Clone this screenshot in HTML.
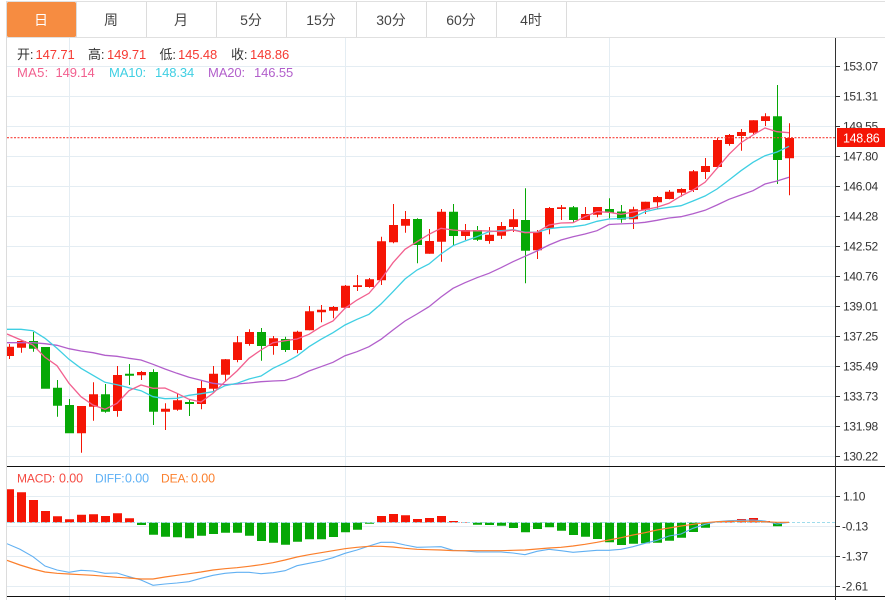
<!DOCTYPE html>
<html><head><meta charset="utf-8">
<style>
html,body{margin:0;padding:0;background:#fff;width:885px;height:600px;overflow:hidden}
svg{display:block}
text{font-family:"Liberation Sans","Noto Sans CJK SC",sans-serif}
.ax{font-size:12px;fill:#333;letter-spacing:-.3px}
.t{font-size:14px;fill:#444;text-anchor:middle}
.h{font-size:13px;letter-spacing:-.1px}
</style></head><body>
<svg width="885" height="600" viewBox="0 0 885 600" xmlns="http://www.w3.org/2000/svg">
<defs><clipPath id="c"><rect x="7" y="38" width="828" height="562"/></clipPath></defs>
<!-- tabs -->
<path d="M6 1.5H885M6 37.5H885" stroke="#e0e0e0" fill="none"/>
<path d="M6.5 1V600M76.5 2V37M146.5 2V37M216.5 2V37M286.5 2V37M356.5 2V37M426.5 2V37M496.5 2V37M566.5 2V37" stroke="#dcdcdc" fill="none"/>
<rect x="7" y="2" width="69" height="35" rx="1.5" fill="#f68c41"/>
<text class="t" x="41" y="25" style="fill:#fff">日</text>
<text class="t" x="111" y="25">周</text>
<text class="t" x="181" y="25">月</text>
<text class="t" x="251" y="25">5分</text>
<text class="t" x="321" y="25">15分</text>
<text class="t" x="391" y="25">30分</text>
<text class="t" x="461" y="25">60分</text>
<text class="t" x="531" y="25">4时</text>
<!-- grid -->
<path d="M7 66.5H835M7 96.5H835M7 126.5H835M7 156.5H835M7 186.5H835M7 216.5H835M7 246.5H835M7 276.5H835M7 306.5H835M7 336.5H835M7 366.5H835M7 396.5H835M7 426.5H835M7 456.5H835M7 496.5H835M7 526.5H835M7 556.5H835M7 586.5H835M69.5 38V600M345.5 38V600M609.5 38V600" stroke="#e4edf3" fill="none"/>
<g clip-path="url(#c)">
<!-- red wicks -->
<path fill="none" stroke="#f51505" d="M9.5 344V359M21.5 340V352.7M81.5 406V452.7M93.5 382.3V420.7M117.5 366V416.7M141.5 371V380M165.5 403.3V430M177.5 394V410.7M201.5 380V409.3M213.5 366V393M225.5 359V380.7M237.5 336V362.3M249.5 329.3V345.7M273.5 336V354.7M297.5 330.7V353.3M309.5 306V330.3M321.5 305V322.3M333.5 306V318.3M345.5 285V308M357.5 275V291M369.5 278V287.7M381.5 236.7V285M393.5 204V243.3M405.5 211V232.7M429.5 229V253.7M441.5 209V261.7M465.5 224V240M489.5 227V243.7M501.5 222V239M513.5 209V232M537.5 230V259M549.5 207V234.3M561.5 205V220M585.5 207V220M597.5 207V217.3M633.5 206.7V229M645.5 201.7V214M657.5 196V209M669.5 190V199.3M681.5 188.3V196.7M693.5 170V192M705.5 158V179M717.5 137.7V167.7M729.5 134V145.7M741.5 129V150.7M753.5 120.3V134M765.5 113.3V126M789.5 123.3V195.3"/>
<!-- green wicks -->
<path fill="none" stroke="#06a806" d="M33.5 332V351.7M57.5 380V416.7M69.5 399V433M105.5 384V412.7M129.5 364V385M153.5 369.3V425M189.5 399.3V416M261.5 328V360.7M285.5 336.7V352M417.5 218.3V263.3M453.5 204V245.7M477.5 226V241M525.5 188.3V283.3M573.5 206V222.7M609.5 198.3V218.3M621.5 205V222.7M777.5 85V184"/>
<!-- red bodies -->
<path fill="#f51505" d="M5 346.7h9V356h-9zM17 341h9V347.7h-9zM77 406h9V433.3h-9zM89 394.3h9V406.7h-9zM113 375h9V411h-9zM137 372h9V375.3h-9zM161 408.7h9V411.7h-9zM173 400.3h9V409.7h-9zM197 388h9V404h-9zM209 373.7h9V388.7h-9zM221 359.3h9V374.7h-9zM233 342.3h9V360h-9zM245 332h9V344h-9zM269 338.3h9V346h-9zM293 331.7h9V350h-9zM305 311.3h9V330.3h-9zM317 309.7h9V312.3h-9zM329 307h9V310.7h-9zM341 285.7h9V307.7h-9zM353 285.3h9V287h-9zM365 279.3h9V287h-9zM377 241.3h9V280.3h-9zM389 225h9V242.3h-9zM401 219h9V225.7h-9zM425 241h9V253.7h-9zM437 211.7h9V241.7h-9zM461 230h9V236h-9zM485 234.7h9V241h-9zM497 226h9V235.7h-9zM509 219.3h9V227h-9zM533 231.7h9V250.3h-9zM545 208h9V228.3h-9zM557 207.3h9V209h-9zM581 214h9V220h-9zM593 207h9V214.7h-9zM629 209.3h9V219.3h-9zM641 201.7h9V209.7h-9zM653 197h9V202.3h-9zM665 191.7h9V199h-9zM677 189h9V192.7h-9zM689 171.3h9V190h-9zM701 166h9V172h-9zM713 140h9V167h-9zM725 135h9V144h-9zM737 132h9V136h-9zM749 120.3h9V132.7h-9zM761 116.3h9V121h-9zM785 138h9V158.3h-9z"/>
<!-- green bodies -->
<path fill="#06a806" d="M29 341h9V348.7h-9zM41 347h9V388.7h-9zM53 387.7h9V405.7h-9zM65 405h9V433.3h-9zM101 394.3h9V411.7h-9zM125 373.7h9V375.7h-9zM149 372h9V411.7h-9zM185 402h9V404h-9zM257 332h9V346h-9zM281 339h9V350h-9zM413 219h9V245h-9zM449 211.7h9V236h-9zM473 230h9V239.7h-9zM521 220h9V250.7h-9zM569 207.3h9V220h-9zM605 209h9V212.5h-9zM617 211.5h9V219.5h-9zM773 116.3h9V160h-9z"/>
<!-- MA lines -->
<polyline fill="none" stroke="#b25fcb" stroke-width="1.3" points="7,342.7 21,342.7 33,342.7 45,343.7 57,345.3 69,348.7 81,351 93,352.7 105,355.3 117,356.3 129,358.3 141,360 153,364.3 165,369 177,373.3 189,377.3 201,380.3 213,383.3 225,384.7 237,384 249,383 261,381.7 273,381 285,380.5 297,376.7 309,371 321,366.7 333,362.3 345,355.7 357,351.7 369,346.7 381,339.3 393,330 405,321 417,314 429,306.7 441,297 453,288.3 465,282.7 477,277.7 489,273.3 501,267.7 513,261.7 525,256.3 537,251 549,245 561,240 573,236.7 585,234 597,230.7 609,224.5 621,223.9 633,223.4 645,222.3 657,220.3 669,218 681,216.7 693,213.7 705,210.3 717,205 729,199.3 741,195 753,190.7 765,184 777,181 789,177.3"/>
<polyline fill="none" stroke="#3fcfe3" stroke-width="1.3" points="7,329.3 21,329.3 33,330.7 45,338.3 57,348.3 69,359.3 81,368.3 93,375.3 105,382.3 117,384.7 129,387.7 141,390.7 153,396.7 165,398.7 177,398.3 189,395.3 201,393.7 213,391.7 225,385.7 237,383.3 249,379 261,376 273,368.3 285,362.7 297,356 309,346.7 321,339.3 333,332.7 345,325 357,319.3 369,314.3 381,304 393,291.7 405,279 417,270 429,264 441,254 453,245.7 465,241 477,236.7 489,231.7 501,230.7 513,229.7 525,232.3 537,232.3 549,228.7 561,227.3 573,226.7 585,225 597,221.3 609,219 621,218.5 633,217.5 645,211.7 657,209 669,207.3 681,205.7 693,201 705,196 717,189 729,180 741,170.7 753,162.3 765,155.7 777,152 789,146.3"/>
<polyline fill="none" stroke="#f2608f" stroke-width="1.3" points="7,334 21,340 33,345 45,357.3 57,365.7 69,383.3 81,396.7 93,405 105,409.3 117,403.3 129,390.7 141,385 153,388.3 165,388 177,393.3 189,399.3 201,402 213,393.3 225,381.7 237,371 249,358.3 261,350 273,342.7 285,340.7 297,339 309,334.3 321,326.7 333,321 345,308.3 357,300 369,293.3 381,279.3 393,262.7 405,249.3 417,241.7 429,234.3 441,228.3 453,230 465,231 477,230.7 489,231 501,231.7 513,230 525,232.7 537,232.3 549,225 561,223 573,222.7 585,216.7 597,211.7 609,212.3 621,214.3 633,212 645,209.7 657,207.3 669,203.3 681,196 693,190 705,182.3 717,168.3 729,154.3 741,142.7 753,135 765,128 777,131.7 789,132.7"/>
<!-- MACD bars -->
<path fill="#f51505" d="M5 489.3h9V522.5h-9zM17 492.3h9V522.5h-9zM29 500h9V522.5h-9zM41 511h9V522.5h-9zM53 516.3h9V522.5h-9zM65 519.3h9V522.5h-9zM77 514.7h9V522.5h-9zM89 514.3h9V522.5h-9zM101 516h9V522.5h-9zM113 513.3h9V522.5h-9zM125 518.3h9V522.5h-9zM377 516h9V522.5h-9zM389 514h9V522.5h-9zM401 515.3h9V522.5h-9zM413 519h9V522.5h-9zM425 518h9V522.5h-9zM437 516h9V522.5h-9zM449 521h9V522.5h-9zM461 522h9V522.5h-9zM713 521.5h9V522.5h-9zM725 521h9V522.5h-9zM737 519h9V522.5h-9zM749 518h9V522.5h-9zM761 521h9V522.5h-9z"/>
<path fill="#06a806" d="M137 522.5h9V525h-9zM149 522.5h9V534.7h-9zM161 522.5h9V536.7h-9zM173 522.5h9V537.3h-9zM185 522.5h9V538.3h-9zM197 522.5h9V535.7h-9zM209 522.5h9V534h-9zM221 522.5h9V532.7h-9zM233 522.5h9V532.7h-9zM245 522.5h9V535.7h-9zM257 522.5h9V541h-9zM269 522.5h9V542.7h-9zM281 522.5h9V544.7h-9zM293 522.5h9V541.7h-9zM305 522.5h9V539.3h-9zM317 522.5h9V539.3h-9zM329 522.5h9V537h-9zM341 522.5h9V532.3h-9zM353 522.5h9V529.7h-9zM365 522.5h9V523.7h-9zM473 522.5h9V524.7h-9zM485 522.5h9V525h-9zM497 522.5h9V525.7h-9zM509 522.5h9V528h-9zM521 522.5h9V532.3h-9zM533 522.5h9V529h-9zM545 522.5h9V527.3h-9zM557 522.5h9V530.7h-9zM569 522.5h9V535h-9zM581 522.5h9V536.7h-9zM593 522.5h9V539h-9zM605 522.5h9V542.3h-9zM617 522.5h9V545h-9zM629 522.5h9V543.7h-9zM641 522.5h9V543.3h-9zM653 522.5h9V542.7h-9zM665 522.5h9V540.7h-9zM677 522.5h9V537.7h-9zM689 522.5h9V532h-9zM701 522.5h9V527.7h-9zM773 522.5h9V526.3h-9z"/>
<path d="M7 522.5H835" stroke="#9fdcec" stroke-dasharray="3 2" fill="none"/>
<polyline fill="none" stroke="#61b0f2" stroke-width="1.1" points="7,543.7 20,549.3 33,556.7 45,566 57,570 69,572.3 81,570.3 93,571 105,573.3 117,573 129,576.7 141,580 153,585.3 165,584 177,583 189,581.7 201,578.3 213,575.3 225,573.3 237,572.3 249,572.3 261,573.7 273,572.7 285,570.7 297,565.7 309,563.3 321,561 333,557.7 345,553.3 357,550 369,546 381,542.3 393,542.3 405,545 417,547.3 429,547 441,546.7 453,550.3 465,551 477,552 489,552 501,552 513,553 525,554.7 537,551.3 549,549.3 561,550.7 573,552.3 585,551.3 597,550.3 609,550.3 621,549.3 633,546.7 645,543.3 657,540.3 669,536 681,534 693,528.3 705,524.3 717,521.7 729,520.7 741,520.3 753,520 765,521 777,524 789,522.3"/>
<polyline fill="none" stroke="#fb7f2c" stroke-width="1.2" points="7,560.3 20,565 33,569 45,572 57,573.3 69,574 81,574.7 93,575.3 105,576.3 117,577.3 129,578 141,579 153,579 165,577 177,575.3 189,573.7 201,572 213,570 225,568.7 237,567.7 249,566.3 261,564.7 273,562.7 285,560 297,557 309,554.7 321,552.7 333,550.7 345,548.7 357,547.3 369,546.3 381,546.3 393,547 405,548.3 417,549.3 429,549.7 441,550 453,550.7 465,550.7 477,550.7 489,550.7 501,550.7 513,550.3 525,550 537,549 549,548 561,547.3 573,546 585,544.3 597,542.3 609,540 621,537.7 633,535 645,532.7 657,530 669,528 681,526 693,524.3 705,522.7 717,521.7 729,521.3 741,521.3 753,521.3 765,521.7 777,522.3 789,522.3"/>
</g>
<!-- dividers -->
<path d="M7 466.5H885M7 596.5H885" stroke="#111" fill="none"/>
<!-- axis -->
<path d="M835.5 38V600" stroke="#333" fill="none"/>
<path d="M836 66.5h4M836 96.5h4M836 126.5h4M836 156.5h4M836 186.5h4M836 216.5h4M836 246.5h4M836 276.5h4M836 306.5h4M836 336.5h4M836 366.5h4M836 396.5h4M836 426.5h4M836 456.5h4M836 496.5h4M836 526.5h4M836 556.5h4M836 586.5h4" stroke="#333" fill="none"/>
<text class="ax" x="843" y="70.5">153.07</text>
<text class="ax" x="843" y="100.5">151.31</text>
<text class="ax" x="843" y="130.5">149.55</text>
<text class="ax" x="843" y="160.5">147.80</text>
<text class="ax" x="843" y="190.5">146.04</text>
<text class="ax" x="843" y="220.5">144.28</text>
<text class="ax" x="843" y="250.5">142.52</text>
<text class="ax" x="843" y="280.5">140.76</text>
<text class="ax" x="843" y="310.5">139.01</text>
<text class="ax" x="843" y="340.5">137.25</text>
<text class="ax" x="843" y="370.5">135.49</text>
<text class="ax" x="843" y="400.5">133.73</text>
<text class="ax" x="843" y="430.5">131.98</text>
<text class="ax" x="843" y="460.5">130.22</text>
<text class="ax" x="843" y="500.5">1.10</text>
<text class="ax" x="842" y="530.5">-0.13</text>
<text class="ax" x="842" y="560.5">-1.37</text>
<text class="ax" x="842" y="590.5">-2.61</text>
<!-- last price -->
<path d="M7 137.7H835" stroke="#f8403a" stroke-width="1.2" stroke-dasharray="2 1.5" fill="none"/>
<rect x="837" y="128" width="48" height="19" fill="#f51505"/>
<text x="843" y="142.5" style="font-size:12.5px;fill:#fff;letter-spacing:-.3px">148.86</text>
<!-- header text -->
<text class="h" x="17" y="59" fill="#333">开:</text><text class="h" x="35.5" y="59" fill="#f63a32">147.71</text>
<text class="h" x="88" y="59" fill="#333">高:</text><text class="h" x="107" y="59" fill="#f63a32">149.71</text>
<text class="h" x="159.5" y="59" fill="#333">低:</text><text class="h" x="178" y="59" fill="#f63a32">145.48</text>
<text class="h" x="231" y="59" fill="#333">收:</text><text class="h" x="250" y="59" fill="#f63a32">148.86</text>
<text class="h" x="17" y="77" fill="#f2608f" style="letter-spacing:.3px">MA5:</text><text class="h" x="55.5" y="77" fill="#f2608f">149.14</text>
<text class="h" x="109" y="77" fill="#3fcfe3">MA10:</text><text class="h" x="155" y="77" fill="#3fcfe3">148.34</text>
<text class="h" x="208" y="77" fill="#b25fcb">MA20:</text><text class="h" x="254" y="77" fill="#b25fcb">146.55</text>
<text class="h" x="17" y="482.5" fill="#f54a42" style="font-size:12px">MACD:</text><text class="h" x="59" y="482.5" fill="#f54a42" style="font-size:12.5px">0.00</text>
<text class="h" x="95" y="482.5" fill="#5db0f5" style="font-size:12px">DIFF:</text><text class="h" x="125" y="482.5" fill="#5db0f5" style="font-size:12.5px">0.00</text>
<text class="h" x="161" y="482.5" fill="#fb7f2c" style="font-size:12px">DEA:</text><text class="h" x="191" y="482.5" fill="#fb7f2c" style="font-size:12.5px">0.00</text>
</svg>
</body></html>
